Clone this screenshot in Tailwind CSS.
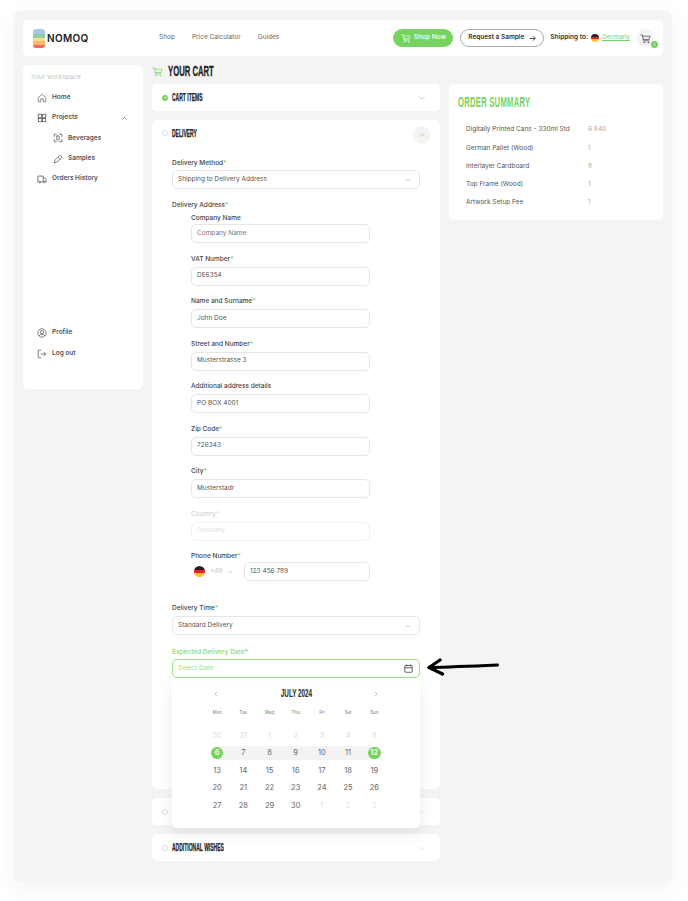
<!DOCTYPE html>
<html lang="en">
<head>
  <meta charset="UTF-8" />
  <title>Nomoq - Your Cart</title>
  <script src="https://cdn.jsdelivr.net/npm/@tailwindcss/browser@4"></script>
</head>
<body class="bg-white font-['Inter',sans-serif] text-[#444]">
  <svg class="hidden">
    <symbol id="cart" viewBox="0 0 24 24" fill="none" stroke="currentColor" stroke-width="1.6" stroke-linecap="round" stroke-linejoin="round">
      <path d="M2 4h3l3 13h11M5.6 7H22l-2.2 7H7.2" /><circle cx="9" cy="20.5" r="1" /><circle cx="18" cy="20.5" r="1" />
    </symbol>
    <symbol id="down" viewBox="0 0 12 12" fill="none" stroke="currentColor" stroke-width="1.2" stroke-linecap="round" stroke-linejoin="round">
      <path d="M2.5 4.5 6 8l3.5-3.5" />
    </symbol>
    <symbol id="up" viewBox="0 0 12 12" fill="none" stroke="currentColor" stroke-width="1.2" stroke-linecap="round" stroke-linejoin="round">
      <path d="M2.5 7.5 6 4l3.5 3.5" />
    </symbol>
  </svg>

  <div class="h-[901px] overflow-hidden pl-[14px] pt-[11px]">
    <div class="w-[658px] h-[871px] bg-[#f4f4f4] rounded-[6px] p-[9px] shadow-[0_6px_24px_rgba(0,0,0,0.05)]">

      <!-- Header -->
      <header class="h-[36px] bg-white rounded-[5px] flex items-center pl-[10px] pr-[9px] whitespace-nowrap">
        <div class="flex items-center w-[126px]">
          <div class="w-[12px] h-[19px] rounded-[3px] overflow-hidden flex flex-col">
            <div class="h-[5px] bg-[#a9c8e6]"></div>
            <div class="h-[4px] bg-[#8fcfa3]"></div>
            <div class="h-[3px] bg-[#f6df8c]"></div>
            <div class="h-[4px] bg-[#f8b968]"></div>
            <div class="h-[3px] bg-[#ef6a6a]"></div>
          </div>
          <span class="ml-[2px] text-[10px] font-semibold tracking-[0.3px] text-[#222]">NOMOQ</span>
        </div>
        <nav class="flex text-[6.5px] text-[#666] gap-[17px]">
          <span>Shop</span><span>Price Calculator</span><span>Guides</span>
        </nav>
        <a class="ml-auto w-[60px] h-[18px] rounded-full bg-[#76d35f] text-white text-[6.5px] font-medium flex items-center justify-center gap-[3px]">
          <svg class="w-[10px] h-[10px]"><use href="#cart" /></svg>Shop Now
        </a>
        <a class="ml-[7px] w-[84px] h-[18px] rounded-full border border-[#aaa] text-[#333] text-[6.5px] font-semibold flex items-center justify-center gap-[5px]">
          Request a Sample
          <svg class="w-[7px] h-[7px]" viewBox="0 0 12 12" fill="none" stroke="currentColor" stroke-width="1.4" stroke-linecap="round" stroke-linejoin="round"><path d="M1.5 6h9M7 2.5 10.5 6 7 9.5" /></svg>
        </a>
        <span class="ml-[6px] text-[6.5px] font-semibold text-[#333]">Shipping to:</span>
        <div class="ml-[3px] w-[8px] h-[8px] rounded-full overflow-hidden flex flex-col">
          <div class="h-1/3 bg-[#222]"></div><div class="h-1/3 bg-[#d8262c]"></div><div class="h-1/3 bg-[#f7c81e]"></div>
        </div>
        <a class="ml-[3px] w-[27px] text-[6.5px] text-[#76d35f] underline">Germany</a>
        <div class="relative ml-[7px] w-[18px] h-[18px] rounded-full bg-[#f4f4f4] flex items-center justify-center text-[#444]">
          <svg class="w-[11px] h-[11px]"><use href="#cart" /></svg>
          <span class="absolute right-[-4px] bottom-[-1px] w-[7px] h-[7px] rounded-full bg-[#76d35f] text-white text-[4px] flex items-center justify-center">1</span>
        </div>
      </header>

      <div class="flex gap-[9px] mt-[9px] items-start">
        <!-- Sidebar -->
        <aside class="w-[120px] h-[324px] bg-white rounded-[5px] pt-[8px] pl-[8px] flex flex-col text-[6.5px] font-semibold text-[#555]">
          <p class="text-[#c4c4c4] font-normal h-[8px] leading-[8px]">Your workspace</p>
          <ul class="mt-[6.5px]">
            <li class="h-[20.4px] flex items-center pl-[6px]">
              <svg class="w-[10px] h-[10px] mr-[5px]" viewBox="0 0 24 24" fill="none" stroke="currentColor" stroke-width="1.6" stroke-linejoin="round"><path d="M3 11 12 3l9 8v10h-6v-7H9v7H3z" /></svg>Home
            </li>
            <li class="h-[20.4px] flex items-center pl-[6px]">
              <svg class="w-[10px] h-[10px] mr-[5px]" viewBox="0 0 24 24" fill="none" stroke="currentColor" stroke-width="1.8"><rect x="3" y="3" width="8" height="8" /><rect x="13" y="3" width="8" height="8" /><rect x="3" y="13" width="8" height="8" /><rect x="13" y="13" width="8" height="8" /></svg>Projects
              <svg class="w-[7px] h-[7px] ml-[43px]"><use href="#up" /></svg>
            </li>
            <li class="h-[20.4px] flex items-center pl-[22px]">
              <svg class="w-[10px] h-[10px] mr-[5px]" viewBox="0 0 24 24" fill="none" stroke="currentColor" stroke-width="1.8" stroke-linecap="round"><path d="M3 8V3h5M16 3h5v5M21 16v5h-5M8 21H3v-5" /><rect x="9" y="7" width="6" height="10" rx="1" /></svg>Beverages
            </li>
            <li class="h-[20.4px] flex items-center pl-[22px]">
              <svg class="w-[10px] h-[10px] mr-[5px]" viewBox="0 0 24 24" fill="none" stroke="currentColor" stroke-width="1.8" stroke-linecap="round" stroke-linejoin="round"><path d="M3 21c1-5 3-8 5-10l7-7c2-1 4 0 5 1 1 2 1 3 0 5l-8 7c-2 2-5 3-9 4zM12 8l4 4" /></svg>Samples
            </li>
            <li class="h-[20.4px] flex items-center pl-[6px]">
              <svg class="w-[10px] h-[10px] mr-[5px]" viewBox="0 0 24 24" fill="none" stroke="currentColor" stroke-width="1.8" stroke-linejoin="round"><path d="M4 19H2V5h13v14H9M15 9h4l3 4v6h-2M15 19h1" /><circle cx="6.5" cy="19" r="2.2" /><circle cx="18" cy="19" r="2.2" /></svg>Orders History
            </li>
          </ul>
          <ul class="mt-[133.5px]">
            <li class="h-[20.5px] flex items-center pl-[6px]">
              <svg class="w-[10px] h-[10px] mr-[5px]" viewBox="0 0 24 24" fill="none" stroke="currentColor" stroke-width="1.8"><circle cx="12" cy="12" r="10" /><circle cx="12" cy="10" r="4" /><path d="M5 19c2-3 4-4 7-4s5 1 7 4" /></svg>Profile
            </li>
            <li class="h-[20.5px] flex items-center pl-[6px]">
              <svg class="w-[10px] h-[10px] mr-[5px]" viewBox="0 0 24 24" fill="none" stroke="currentColor" stroke-width="1.8" stroke-linecap="round" stroke-linejoin="round"><path d="M9 3H3v18h6M10 12h11M17 8l4 4-4 4" /></svg>Log out
            </li>
          </ul>
        </aside>

        <!-- Main column -->
        <main class="w-[288px]">
          <div class="h-[12px] flex items-center">
            <svg class="w-[11px] h-[11px] text-[#76d35f]"><use href="#cart" /></svg>
            <h1 class="ml-[5px] inline-block origin-left scale-x-[0.55] font-['Liberation_Sans',sans-serif] font-bold [-webkit-text-stroke:0.3px_#222] text-[14px] leading-[14px] whitespace-nowrap text-[#222]">YOUR CART</h1>
          </div>
          <section class="mt-[7px] h-[27px] bg-white rounded-[5px] flex items-center pl-[10px] pr-[14px]">
            <span class="w-[6px] h-[6px] rounded-full bg-[#76d35f] flex items-center justify-center">
              <svg class="w-[5px] h-[5px]" viewBox="0 0 12 12" fill="none" stroke="white" stroke-width="2"><path d="m2.5 6 2.5 2.5 4.5-5" /></svg>
            </span>
            <h2 class="ml-[4px] inline-block origin-left scale-x-[0.5] font-['Liberation_Sans',sans-serif] font-bold [-webkit-text-stroke:0.25px_#222] text-[10px] whitespace-nowrap text-[#222]">CART ITEMS</h2>
            <svg class="ml-auto w-[8px] h-[8px] text-[#8fdc7b]"><use href="#down" /></svg>
          </section>

          <!-- Delivery card -->
          <section class="relative mt-[9px] h-[669px] bg-white rounded-[5px] text-[6.5px] text-[#555]">
            <div class="h-[26px] flex items-center pl-[10px] pr-[9px]">
              <span class="w-[6px] h-[6px] rounded-full border border-[#ddd]"></span>
              <h2 class="ml-[4px] inline-block origin-left scale-x-[0.5] font-['Liberation_Sans',sans-serif] font-bold [-webkit-text-stroke:0.25px_#222] text-[10px] whitespace-nowrap text-[#222]">DELIVERY</h2>
              <span class="ml-auto mt-[4px] w-[18px] h-[18px] rounded-full bg-[#f4f4f4] flex items-center justify-center text-[#8fdc7b]">
                <svg class="w-[8px] h-[8px]"><use href="#up" /></svg>
              </span>
            </div>

            <div class="pl-[20px] pr-[20px] pt-[12px]">
              <label class="block h-[8px] leading-[8px] font-medium text-[#444] mt-[1px] mb-[3px]">Delivery Method<span class="text-[#76d35f]">*</span></label>
              <div class="h-[19px] rounded-[5px] border border-[#e6e6e6] flex items-center justify-between pl-[5px] pr-[8px]">
                Shipping to Delivery Address
                <svg class="w-[6px] h-[6px] text-[#aaa]"><use href="#down" /></svg>
              </div>

              <label class="block mt-[12px] h-[8px] leading-[8px] font-medium text-[#444] mb-[5px]">Delivery Address<span class="text-[#76d35f]">*</span></label>

              <div class="pl-[19px] w-[198px]">
                <label class="block h-[8px] leading-[8px] font-medium text-[#444] mb-[2px]">Company Name</label>
                <div class="h-[19px] rounded-[5px] border border-[#e6e6e6] flex items-center pl-[5px] text-[#777]">Company Name</div>

                <label class="block mt-[11.5px] h-[8px] leading-[8px] font-medium text-[#444] mb-[4px]">VAT Number<span class="text-[#76d35f]">*</span></label>
                <div class="h-[19px] rounded-[5px] border border-[#e6e6e6] flex items-center pl-[5px]">DE6354</div>

                <label class="block mt-[11.5px] h-[8px] leading-[8px] font-medium text-[#444] mb-[4px]">Name and Surname<span class="text-[#76d35f]">*</span></label>
                <div class="h-[19px] rounded-[5px] border border-[#e6e6e6] flex items-center pl-[5px]">John Doe</div>

                <label class="block mt-[11.5px] h-[8px] leading-[8px] font-medium text-[#444] mb-[4px]">Street and Number<span class="text-[#76d35f]">*</span></label>
                <div class="h-[19px] rounded-[5px] border border-[#e6e6e6] flex items-center pl-[5px]">Musterstrasse 3</div>

                <label class="block mt-[11.5px] h-[8px] leading-[8px] font-medium text-[#444] mb-[4px]">Additional address details</label>
                <div class="h-[19px] rounded-[5px] border border-[#e6e6e6] flex items-center pl-[5px]">PO BOX 4001</div>

                <label class="block mt-[11.5px] h-[8px] leading-[8px] font-medium text-[#444] mb-[4px]">Zip Code<span class="text-[#76d35f]">*</span></label>
                <div class="h-[19px] rounded-[5px] border border-[#e6e6e6] flex items-center pl-[5px]">726343</div>

                <label class="block mt-[11.5px] h-[8px] leading-[8px] font-medium text-[#444] mb-[4px]">City<span class="text-[#76d35f]">*</span></label>
                <div class="h-[19px] rounded-[5px] border border-[#e6e6e6] flex items-center pl-[5px]">Musterstadr</div>

                <label class="block mt-[11.5px] h-[8px] leading-[8px] text-[#c8c8c8] mb-[4px]">Country<span class="text-[#cfeec7]">*</span></label>
                <div class="h-[19px] rounded-[5px] border border-[#f2f2f2] flex items-center pl-[5px] text-[#e4e4e4]">Germany</div>

                <label class="block mt-[11.5px] h-[8px] leading-[8px] font-medium text-[#444] mb-[2px]">Phone Number<span class="text-[#76d35f]">*</span></label>
                <div class="flex items-center">
                  <div class="w-[11px] h-[11px] ml-[3px] rounded-full overflow-hidden flex flex-col">
                    <div class="h-1/3 bg-[#222]"></div><div class="h-1/3 bg-[#d8262c]"></div><div class="h-1/3 bg-[#f7c81e]"></div>
                  </div>
                  <span class="ml-[5px] w-[12px] text-[#c4c4c4]">+49</span>
                  <svg class="ml-[5px] w-[6px] h-[6px] text-[#bbb]"><use href="#down" /></svg>
                  <div class="ml-[11px] w-[126px] h-[19px] rounded-[5px] border border-[#e6e6e6] flex items-center pl-[5px]">123 456 789</div>
                </div>
              </div>

              <label class="block mt-[23px] h-[8px] leading-[8px] font-medium text-[#444] mb-[4px]">Delivery Time<span class="text-[#76d35f]">*</span></label>
              <div class="h-[19px] rounded-[5px] border border-[#e6e6e6] flex items-center justify-between pl-[5px] pr-[8px]">
                Standard Delivery
                <svg class="w-[6px] h-[6px] text-[#aaa]"><use href="#down" /></svg>
              </div>

              <label class="block mt-[13px] h-[8px] leading-[8px] font-medium text-[#86d973] mb-[3px]">Expected Delivery Date<span class="text-[#76d35f]">*</span></label>
              <div class="h-[19px] rounded-[5px] border border-[#9be088] flex items-center justify-between pl-[5px] pr-[6px] text-[#9be088]">
                Select Date
                <svg class="w-[9px] h-[9px] text-[#333]" viewBox="0 0 24 24" fill="none" stroke="currentColor" stroke-width="2"><rect x="2" y="4" width="20" height="18" rx="2" /><path d="M2 10h20M7 1v5M17 1v5" /></svg>
              </div>
            </div>

            <!-- Date picker dropdown -->
            <div class="absolute z-10 left-[20px] top-[561px] w-[248px] h-[147px] bg-white rounded-b-[5px] shadow-[0_6px_16px_rgba(0,0,0,0.08)] text-[6.5px] text-[#666]">
              <div class="flex items-center justify-between h-[12px] mt-[7px] pl-[41px] pr-[41px] text-[#76d35f]">
                <svg class="w-[6px] h-[6px]" viewBox="0 0 12 12" fill="none" stroke="currentColor" stroke-width="1.4"><path d="M8 2 4 6l4 4" /></svg>
                <span class="inline-block scale-x-[0.55] font-['Liberation_Sans',sans-serif] font-bold [-webkit-text-stroke:0.2px_#333] text-[11.5px] text-[#333] whitespace-nowrap">JULY 2024</span>
                <svg class="w-[6px] h-[6px]" viewBox="0 0 12 12" fill="none" stroke="currentColor" stroke-width="1.4"><path d="m4 2 4 4-4 4" /></svg>
              </div>
              <div class="ml-[32px] w-[183.4px] mt-[8px] grid grid-cols-7 text-center text-[4.5px] text-[#777] h-[10px] items-center">
                <span>Mon</span><span>Tue</span><span>Wed</span><span>Thu</span><span>Fri</span><span>Sat</span><span>Sun</span>
              </div>
              <div class="ml-[32px] w-[183.4px] mt-[8.5px] text-[7.5px]">
                <div class="grid grid-cols-7 text-center h-[17.5px] items-center text-[#dcdcdc]">
                  <span>30</span><span>31</span><span>1</span><span>2</span><span>3</span><span>4</span><span>5</span>
                </div>
                <div class="relative grid grid-cols-7 text-center h-[17.5px] items-center">
                  <div class="absolute left-[7px] right-[7px] top-[2px] h-[14px] bg-[#f3f3f3] rounded-full"></div>
                  <span class="relative mx-auto w-[12.5px] h-[12.5px] rounded-full bg-[#76d35f] text-white font-semibold flex items-center justify-center">6</span>
                  <span class="relative">7</span><span class="relative">8</span><span class="relative">9</span><span class="relative">10</span><span class="relative">11</span>
                  <span class="relative mx-auto w-[12.5px] h-[12.5px] rounded-full bg-[#76d35f] text-white font-semibold flex items-center justify-center">12</span>
                </div>
                <div class="grid grid-cols-7 text-center h-[17.5px] items-center">
                  <span>13</span><span>14</span><span>15</span><span>16</span><span>17</span><span>18</span><span>19</span>
                </div>
                <div class="grid grid-cols-7 text-center h-[17.5px] items-center">
                  <span>20</span><span>21</span><span>22</span><span>23</span><span>24</span><span>25</span><span>26</span>
                </div>
                <div class="grid grid-cols-7 text-center h-[17.5px] items-center">
                  <span>27</span><span>28</span><span>29</span><span>30</span><span class="text-[#e4e4e4]">1</span><span class="text-[#e4e4e4]">2</span><span class="text-[#e4e4e4]">3</span>
                </div>
              </div>
            </div>

            <!-- Hand-drawn arrow annotation -->
            <svg class="absolute z-10 left-[275px] top-[537px] w-[74px] h-[20px]" viewBox="0 0 74 20" fill="none" stroke="#000" stroke-linecap="round" stroke-linejoin="round">
              <path d="M2 10.5C25 10 48 9 70.5 8" stroke-width="3" />
              <path d="M13 3 2 10.5 15.5 17" stroke-width="3.2" />
            </svg>
          </section>

          <section class="mt-[9px] h-[27px] bg-white rounded-[5px] flex items-center pl-[10px] pr-[14px]">
            <span class="w-[6px] h-[6px] rounded-full border border-[#ddd]"></span>
            <svg class="ml-auto w-[8px] h-[8px] text-[#cfeec7]"><use href="#down" /></svg>
          </section>
          <section class="mt-[9px] h-[27px] bg-white rounded-[5px] flex items-center pl-[10px] pr-[14px]">
            <span class="w-[6px] h-[6px] rounded-full border border-[#ddd]"></span>
            <h2 class="ml-[4px] inline-block origin-left scale-x-[0.5] font-['Liberation_Sans',sans-serif] font-bold [-webkit-text-stroke:0.25px_#222] text-[10px] whitespace-nowrap text-[#222]">ADDITIONAL WISHES</h2>
            <svg class="ml-auto w-[8px] h-[8px] text-[#cfeec7]"><use href="#down" /></svg>
          </section>
        </main>

        <!-- Order summary -->
        <aside class="w-[214px] h-[136px] mt-[19px] bg-white rounded-[5px] pl-[9px] pt-[11px]">
          <h2 class="block origin-left scale-x-[0.55] font-['Liberation_Sans',sans-serif] font-bold text-[14px] tracking-[0.4px] whitespace-nowrap text-[#76d35f] leading-[14px]">ORDER SUMMARY</h2>
          <ul class="mt-[12px] pl-[8px] text-[6.5px] text-[#555]">
            <li class="h-[18.3px] flex items-center"><span class="w-[122px]">Digitally Printed Cans - 330ml Std</span><span class="text-[#aaa]">6 840</span></li>
            <li class="h-[18.3px] flex items-center"><span class="w-[122px]">German Pallet (Wood)</span><span class="text-[#aaa]">1</span></li>
            <li class="h-[18.3px] flex items-center"><span class="w-[122px]">Interlayer Cardboard</span><span class="text-[#aaa]">8</span></li>
            <li class="h-[18.3px] flex items-center"><span class="w-[122px]">Top Frame (Wood)</span><span class="text-[#aaa]">1</span></li>
            <li class="h-[18.3px] flex items-center"><span class="w-[122px]">Artwork Setup Fee</span><span class="text-[#aaa]">1</span></li>
          </ul>
        </aside>
      </div>
    </div>
  </div>
</body>
</html>
